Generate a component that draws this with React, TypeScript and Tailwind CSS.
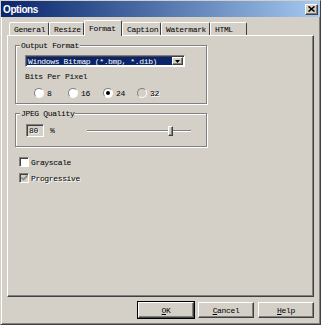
const mono = "font-['Liberation_Mono',monospace] text-[8px] leading-[9px] tracking-[-0.35px] text-black"
const disabled = 'text-[#808080] [text-shadow:1px_1px_0_#fff]'
const raised =
  'border border-t-white border-l-white border-r-[#404040] border-b-[#404040] shadow-[inset_-1px_-1px_0_#808080]'
const sunken =
  'border border-t-[#808080] border-l-[#808080] border-r-white border-b-white shadow-[inset_1px_1px_0_#404040]'

function Tab({ label, active, w }: { label: string; active?: boolean; w: string }) {
  return (
    <div
      className={[
        'flex items-start rounded-t-[2px] border border-b-0 border-t-white border-l-white border-r-[#404040] bg-[#d4d0c8] pl-[4px]',
        active ? 'relative z-10 -mb-px h-[16px] pt-[3px]' : 'h-[13px] pt-[2px]',
        w,
        mono,
      ].join(' ')}
    >
      {label}
    </div>
  )
}

function Radio({ label, checked, off, w }: { label: string; checked?: boolean; off?: boolean; w: string }) {
  return (
    <div className={`flex items-center gap-[3px] ${w}`}>
      <span
        className={`flex h-[10px] w-[10px] items-center justify-center rounded-full border border-t-[#808080] border-l-[#808080] border-r-white border-b-white ${off ? 'bg-[#d4d0c8]' : 'bg-white'}`}
      >
        {checked && <span className="h-[4px] w-[4px] rounded-full bg-black" />}
      </span>
      <span className={`${mono} ${off ? disabled : ''}`}>{label}</span>
    </div>
  )
}

function Btn({ hot, rest, def }: { hot: string; rest: string; def?: boolean }) {
  return (
    <div
      className={`flex h-[16px] w-[56px] items-center justify-center bg-[#d4d0c8] ${def ? 'outline outline-1 outline-black' : ''} ${raised} ${mono}`}
    >
      <span>
        <u>{hot}</u>
        {rest}
      </span>
    </div>
  )
}

export default function App() {
  return (
    <div className="flex h-[325px] w-[321px] flex-col overflow-hidden border border-t-[#d4d0c8] border-l-[#d4d0c8] border-r-[#404040] border-b-[#404040] bg-[#d4d0c8] shadow-[inset_1px_1px_0_#fff,inset_-1px_-1px_0_#808080]">
      {/* title bar */}
      <div className="flex h-[16px] shrink-0 items-center justify-between bg-gradient-to-r from-[#0a246a] to-[#a6caf0] pl-[2px] pr-[2px]">
        <span className="font-['Liberation_Sans',sans-serif] text-[10px] font-bold tracking-[-0.4px] text-white">
          Options
        </span>
        <div className={`flex h-[11px] w-[13px] items-center justify-center bg-[#d4d0c8] ${raised}`}>
          <svg width="7" height="6" viewBox="0 0 7 6">
            <path d="M0.5 0.5 L6.5 5.5 M6.5 0.5 L0.5 5.5" stroke="#000" strokeWidth="1.6" />
          </svg>
        </div>
      </div>

      {/* tabs */}
      <div className="ml-[8px] mt-[3px] flex items-end">
        <Tab label="General" w="w-[40px]" />
        <Tab label="Resize" w="w-[35px]" />
        <Tab label="Format" w="w-[38px]" active />
        <Tab label="Caption" w="w-[39px]" />
        <Tab label="Watermark" w="w-[49px]" />
        <Tab label="HTML" w="w-[37px]" />
      </div>

      {/* panel */}
      <div className={`mx-[6px] flex h-[262px] flex-col bg-[#d4d0c8] ${raised}`}>
        <fieldset className="ml-[7px] mt-[5px] h-[63px] w-[192px] border border-[#808080] shadow-[inset_1px_1px_0_#fff,1px_1px_0_#fff]">
          <legend className={`ml-[4px] bg-[#d4d0c8] px-[1px] ${mono}`}>Output Format</legend>
          <div className={`ml-[9px] mt-[5px] flex h-[12px] w-[160px] bg-white p-[1px] ${sunken}`}>
            <div className={`flex flex-1 items-center bg-[#0a246a] pl-[1px] ${mono} text-white`}>
              Windows Bitmap (*.bmp, *.dib)
            </div>
            <div className={`flex w-[11px] items-center justify-center bg-[#d4d0c8] ${raised}`}>
              <svg width="5" height="3" viewBox="0 0 5 3">
                <path d="M0 0 H5 L2.5 3 Z" fill="#000" />
              </svg>
            </div>
          </div>
          <div className={`ml-[9px] mt-[5px] ${mono}`}>Bits Per Pixel</div>
          <div className="ml-[18px] mt-[7px] flex">
            <Radio label="8" w="w-[34px]" />
            <Radio label="16" w="w-[35px]" />
            <Radio label="24" w="w-[34px]" checked />
            <Radio label="32" w="w-[34px]" off />
          </div>
        </fieldset>

        <fieldset className="ml-[7px] mt-[5px] h-[38px] w-[192px] border border-[#808080] shadow-[inset_1px_1px_0_#fff,1px_1px_0_#fff]">
          <legend className={`ml-[4px] bg-[#d4d0c8] px-[1px] ${mono}`}>JPEG Quality</legend>
          <div className="ml-[10px] mt-[6px] flex items-center">
            <div className={`flex h-[13px] w-[18px] items-center bg-[#d4d0c8] pl-[2px] ${sunken} ${mono} ${disabled}`}>
              80
            </div>
            <span className={`ml-[6px] w-[6px] ${mono}`}>%</span>
            <div className="relative ml-[31px] flex h-[13px] w-[104px] items-center">
              <div className="h-[2px] w-full border-t border-t-[#808080] border-b border-b-white" />
              <div className={`absolute left-[81px] top-[2px] h-[10px] w-[5px] bg-[#d4d0c8] ${raised}`} />
            </div>
          </div>
        </fieldset>

        <div className="ml-[11px] mt-[10px] flex items-center gap-[2px]">
          <span className={`h-[10px] w-[10px] bg-white ${sunken}`} />
          <span className={mono}>Grayscale</span>
        </div>
        <div className="ml-[11px] mt-[6px] flex items-center gap-[2px]">
          <span className={`flex h-[10px] w-[10px] items-center justify-center bg-[#d4d0c8] ${sunken}`}>
            <svg width="7" height="6" viewBox="0 0 7 6">
              <path d="M0.5 2.5 L2.5 4.5 L6.5 0.5" stroke="#808080" strokeWidth="1.5" fill="none" />
            </svg>
          </span>
          <span className={`${mono} ${disabled}`}>Progressive</span>
        </div>
      </div>

      {/* buttons */}
      <div className="mr-[6px] mt-[5px] flex justify-end gap-[4px]">
        <Btn hot="O" rest="K" def />
        <Btn hot="C" rest="ancel" />
        <Btn hot="H" rest="elp" />
      </div>
    </div>
  )
}
